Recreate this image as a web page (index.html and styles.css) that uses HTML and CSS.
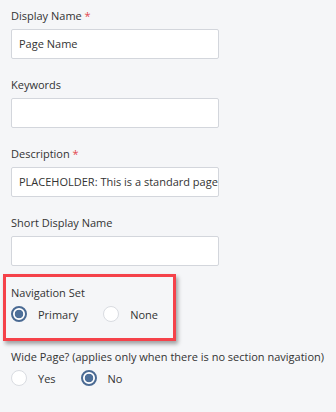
FILE: index.html
```html
<html>

<head>
    <link rel="stylesheet" href="styles.css">
</head>

<body>
    <form class="page-form">
        <div class="field">
            <label class="field-label">Display Name <span class="req">*</span></label>
            <div class="text-input">Page Name</div>
        </div>
        <div class="field">
            <label class="field-label">Keywords</label>
            <div class="text-input"></div>
        </div>
        <div class="field">
            <label class="field-label">Description <span class="req">*</span></label>
            <div class="text-input">PLACEHOLDER: This is a standard page</div>
        </div>
        <div class="field">
            <label class="field-label">Short Display Name</label>
            <div class="text-input"></div>
        </div>

        <div class="field highlight">
            <label class="field-label">Navigation Set</label>
            <div class="radio-row">
                <span class="option"><span class="radio checked"></span>Primary</span>
                <span class="option"><span class="radio"></span>None</span>
            </div>
        </div>

        <div class="field wide">
            <label class="field-label">Wide Page? (applies only when there is no section navigation)</label>
            <div class="radio-row">
                <span class="option"><span class="radio"></span>Yes</span>
                <span class="option"><span class="radio checked"></span>No</span>
            </div>
        </div>
    </form>
</body>

</html>
```

FILE: styles.css
```css
body {
    margin: 0;
    padding: 8px 11px;
    background-color: #f5f6f8;
    font-family: "Open Sans", "Liberation Sans", sans-serif;
    font-size: 11px;
    color: #333;
}

.field + .field {
    margin-top: 18px;
}

.field-label {
    display: block;
    line-height: 16px;
    margin-bottom: 5px;
}

.req {
    color: #e3474d;
}

.text-input {
    box-sizing: border-box;
    width: 208px;
    height: 30px;
    line-height: 28px;
    padding: 0 7px;
    background-color: #fff;
    border: 1px solid #d3d6dc;
    border-radius: 2px;
    white-space: nowrap;
    overflow: hidden;
}

/* red annotation box round the navigation set */
.field.highlight {
    margin: 8px -8px 0;
    padding: 8px 5px 16px;
    border: 3px solid #f5424a;
    width: 157px;
    box-shadow: 2px 3px 4px rgba(0, 0, 0, 0.35);
}

.field.wide {
    margin-top: 8px;
}

.radio-row {
    display: flex;
    align-items: center;
    height: 16px;
}

.option {
    display: flex;
    align-items: center;
    gap: 11px;
    margin-right: 25px;
}

.radio {
    box-sizing: border-box;
    width: 16px;
    height: 16px;
    border-radius: 50%;
    border: 1.5px solid #d9dce1;
    background-color: #fff;
}

.radio.checked {
    border: 2px solid #4a6a93;
    background: radial-gradient(circle, #4d6f99 0 4px, #fff 4.6px);
}
```
